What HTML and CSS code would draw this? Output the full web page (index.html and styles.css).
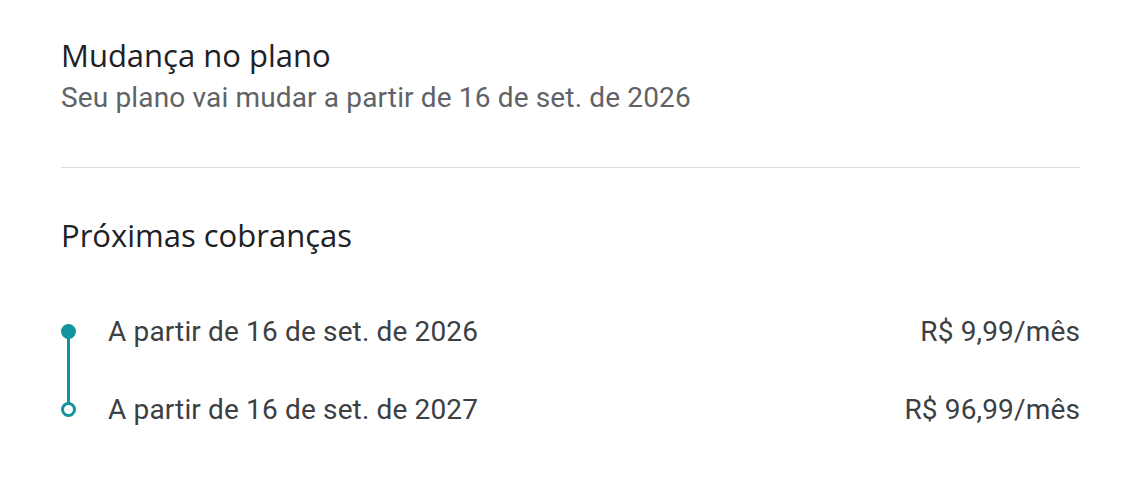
FILE: index.html
```html
<!DOCTYPE html>
<html lang="pt-BR">
<head>
  <meta charset="UTF-8" />
  <title>Mudança no plano</title>
  <link rel="stylesheet" href="styles.css">
</head>
<body>
  <div class="panel">
    <!-- Plan change -->
    <section class="change">
      <h2>Mudança no plano</h2>
      <p class="sub">Seu plano vai mudar a partir de 16 de set. de 2026</p>
    </section>

    <hr class="divider" />

    <!-- Upcoming charges -->
    <section class="charges">
      <h2>Próximas cobranças</h2>
      <ul class="timeline">
        <li class="step current">
          <span class="dot"></span>
          <span class="label">A partir de 16 de set. de 2026</span>
          <span class="price">R$ 9,99/mês</span>
        </li>
        <li class="step">
          <span class="dot"></span>
          <span class="label">A partir de 16 de set. de 2027</span>
          <span class="price">R$ 96,99/mês</span>
        </li>
      </ul>
    </section>
  </div>
</body>
</html>
```

FILE: styles.css
```css
body {
  margin: 0;
  background: #fff;
  font-family: Roboto, "Liberation Sans", sans-serif;
  color: #3c4043;
}

.panel {
  padding: 35px 44px 0 61px;
}

h2 {
  font-family: "Open Sans", Roboto, sans-serif;
  font-weight: 500;
  font-size: 31px;
  color: #202124;
  margin: 0;
  line-height: 40px;
}

.sub {
  margin: 5px 0 0;
  font-size: 28px;
  line-height: 36px;
  letter-spacing: 0.15px;
  color: #5f6368;
}

.divider {
  border: 0;
  border-top: 1px solid #dadce0;
  margin: 51px 0 0;
}

.charges {
  padding-top: 47px;
}

.timeline {
  list-style: none;
  margin: 37px 0 0;
  padding: 0;
}

.step {
  display: flex;
  align-items: center;
  height: 78px;
  position: relative;
  font-size: 28px;
  letter-spacing: 0.15px;
}

.step .label {
  flex: 1;
  margin-left: 32px;
}

.dot {
  width: 15px;
  height: 15px;
  border-radius: 50%;
  background: #12939f;
  box-sizing: border-box;
  position: relative;
  z-index: 1;
}

.step + .step .dot {
  background: #fff;
  border: 3px solid #12939f;
}

.step.current::after {
  content: "";
  position: absolute;
  left: 6px;
  top: 39px;
  width: 3px;
  height: 78px;
  background: #12939f;
}
```
